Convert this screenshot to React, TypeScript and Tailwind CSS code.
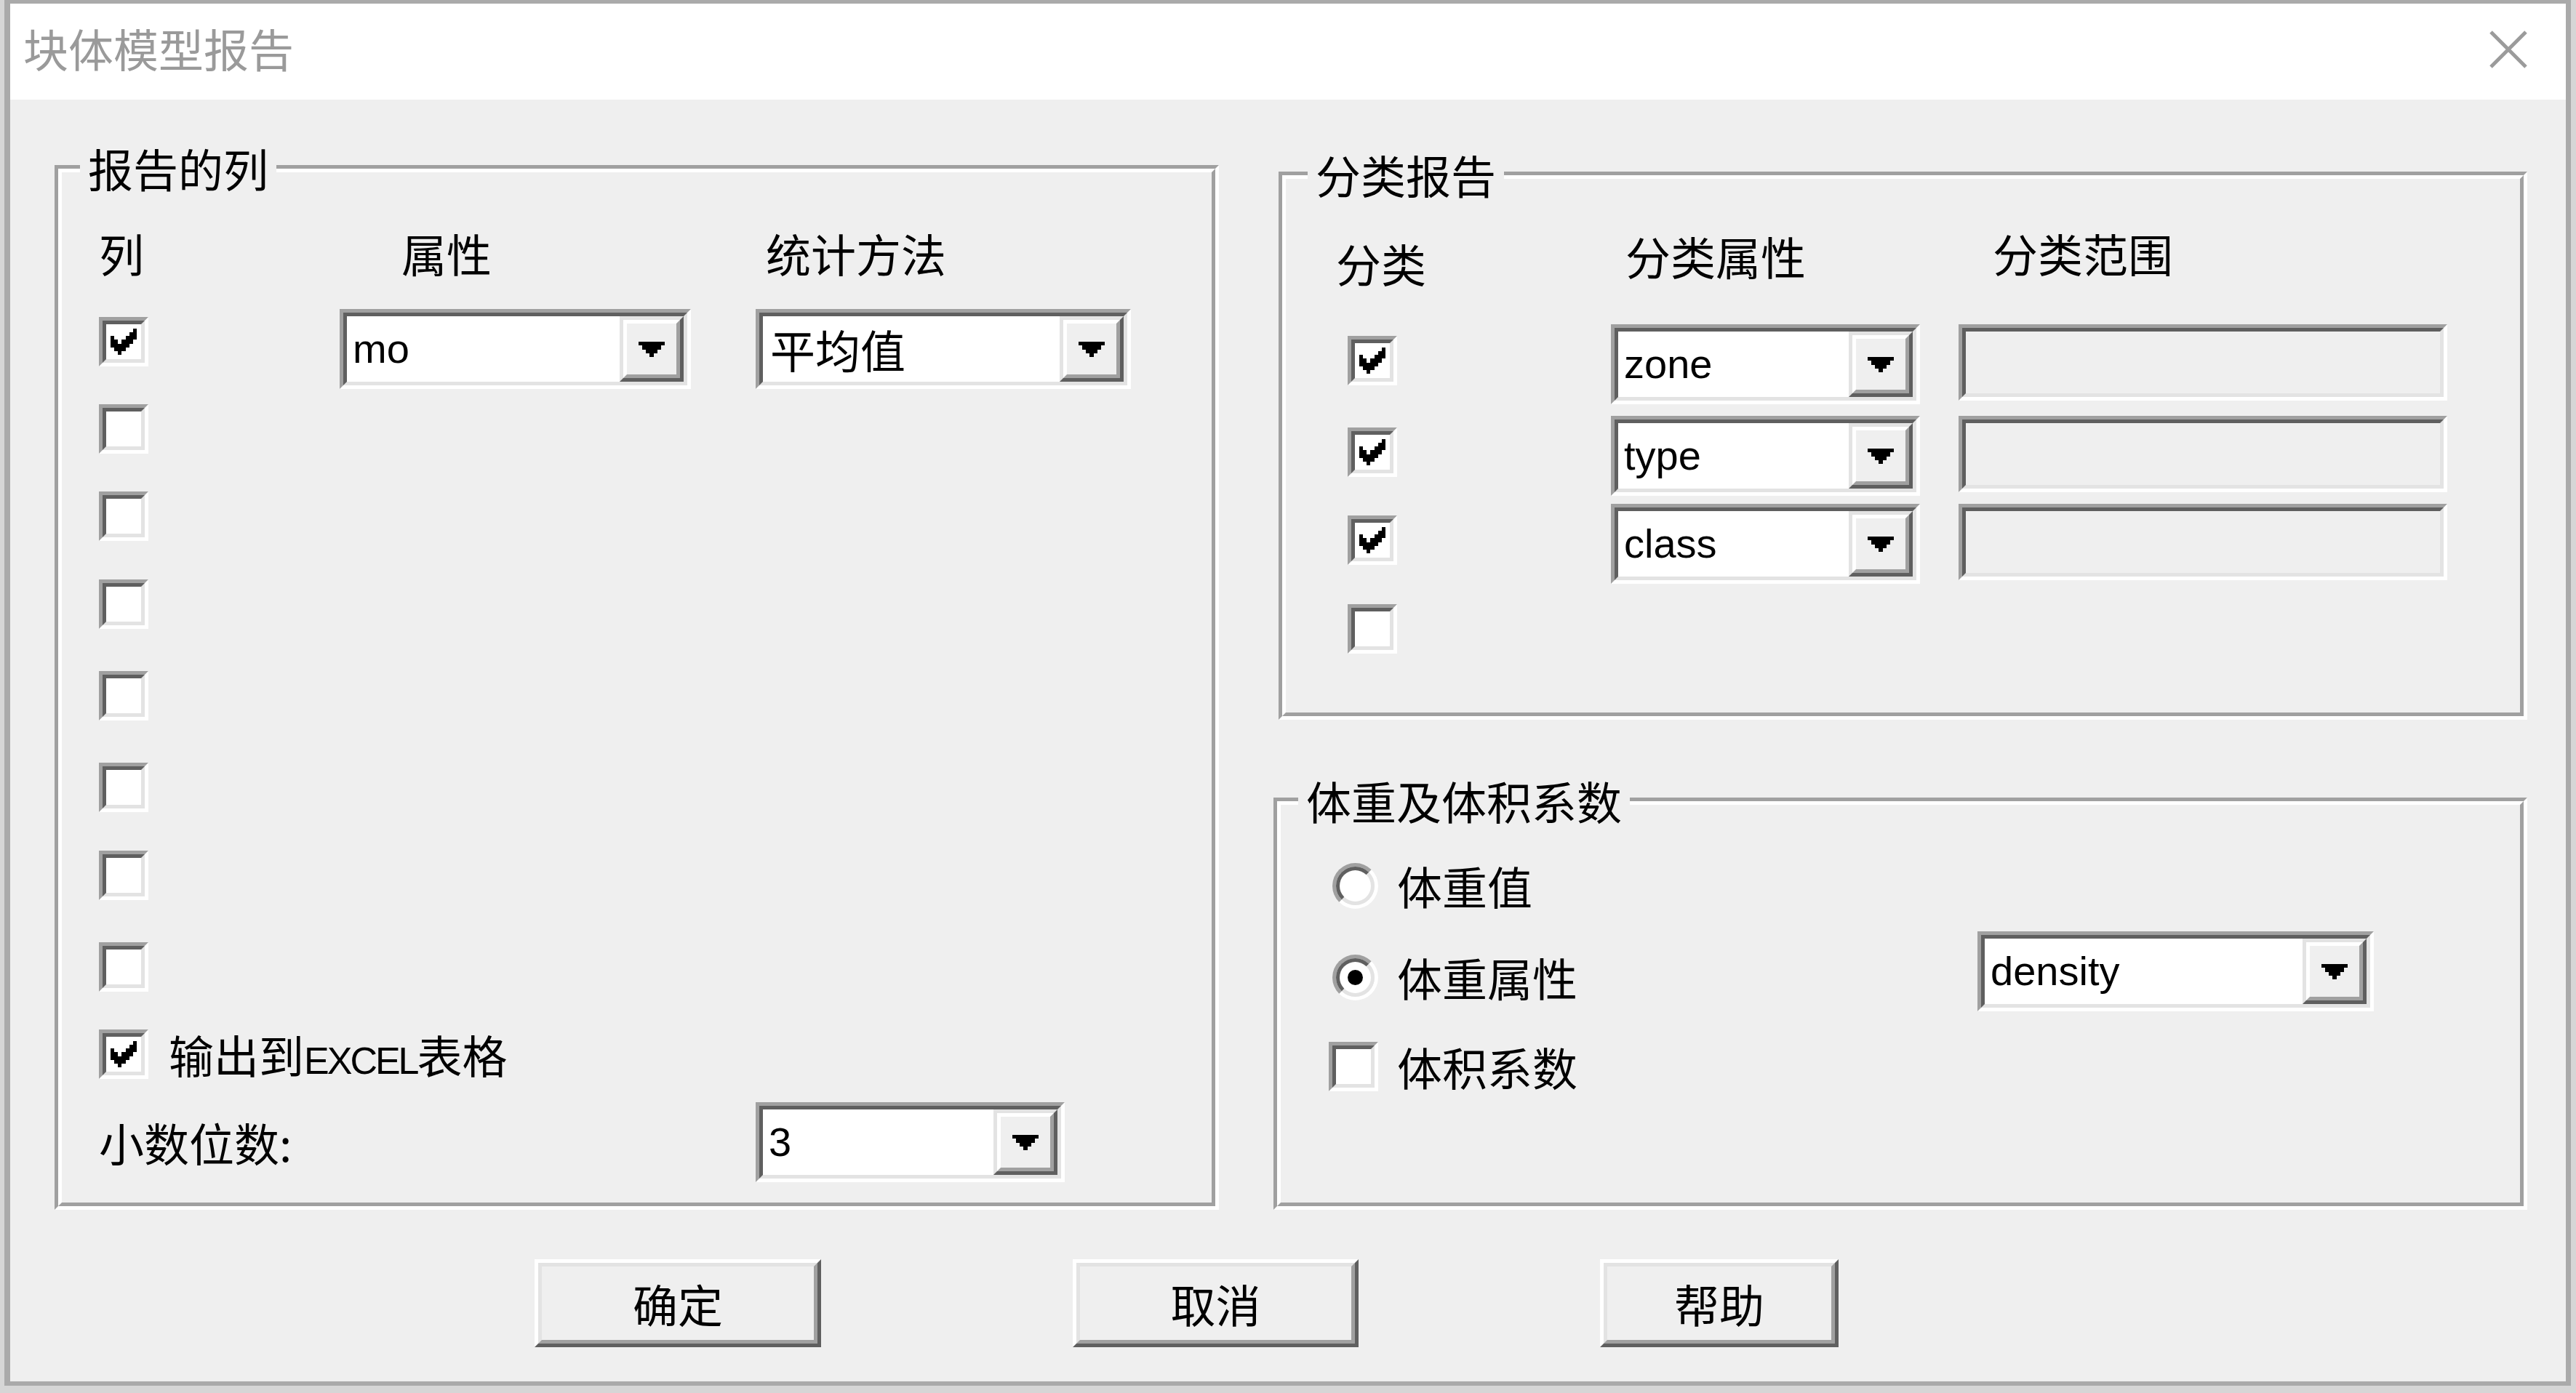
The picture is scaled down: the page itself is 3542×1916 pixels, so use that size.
import type { ReactNode } from "react"

const cjk = "font-['Noto_Sans_CJK_SC',sans-serif]"
const latin = "font-['Liberation_Sans','Noto_Sans_CJK_SC',sans-serif]"

function CheckMark() {
  return (
    <svg viewBox="0 0 7 7" className="w-[36px] h-[36px]" shapeRendering="crispEdges">
      <path
        d="M0 2h1v3H0zM1 3h1v3H1zM2 4h1v3H2zM3 3h1v3H3zM4 2h1v3H4zM5 1h1v3H5zM6 0h1v3H6z"
        fill="#000"
      />
    </svg>
  )
}

function Arrow() {
  return (
    <svg viewBox="0 0 7 4" className="w-[36px] h-[21px]" shapeRendering="crispEdges">
      <path d="M0 0h7v1H6v1H5v1H4v1H3V3H2V2H1V1H0z" fill="#000" />
    </svg>
  )
}

// classic sunken 3D frame
function Sunken({ className = "", inner = "", children }: { className?: string; inner?: string; children?: ReactNode }) {
  return (
    <div className={`border-[5px] border-t-[#a0a0a0] border-l-[#a0a0a0] border-r-white border-b-white ${className}`}>
      <div className={`w-full h-full border-[5px] border-t-[#5f5f5f] border-l-[#5f5f5f] border-r-[#e3e3e3] border-b-[#e3e3e3] ${inner}`}>
        {children}
      </div>
    </div>
  )
}

function Checkbox({ checked = false, className = "" }: { checked?: boolean; className?: string }) {
  return (
    <Sunken className={`w-[68px] h-[68px] shrink-0 ${className}`} inner="bg-white flex items-center justify-center">
      {checked && <CheckMark />}
    </Sunken>
  )
}

function Radio({ selected = false }: { selected?: boolean }) {
  return (
    <div className="w-[63px] h-[63px] shrink-0 rounded-full border-[5px] border-t-[#a0a0a0] border-l-[#a0a0a0] border-r-white border-b-white">
      <div className="w-full h-full rounded-full border-[5px] border-t-[#5f5f5f] border-l-[#5f5f5f] border-r-[#e3e3e3] border-b-[#e3e3e3] bg-white flex items-center justify-center">
        {selected && <div className="w-[21px] h-[21px] rounded-full bg-black" />}
      </div>
    </div>
  )
}

function Dropdown({ value, cjkText = false, className = "" }: { value: string; cjkText?: boolean; className?: string }) {
  return (
    <Sunken className={`h-[110px] shrink-0 ${className}`} inner="flex bg-white">
      <div
        className={`flex-1 flex items-center text-black ${
          cjkText ? `${cjk} text-[62px] pl-[10px]` : `${latin} text-[56px] pl-[8px]`
        }`}
      >
        {value}
      </div>
      <div className="w-[88px] border-[5px] border-t-[#e3e3e3] border-l-[#e3e3e3] border-r-[#5f5f5f] border-b-[#5f5f5f]">
        <div className="w-full h-full border-[5px] border-t-white border-l-white border-r-[#a0a0a0] border-b-[#a0a0a0] bg-[#efefef] flex items-center justify-center">
          <Arrow />
        </div>
      </div>
    </Sunken>
  )
}

function Group({
  title,
  legend,
  className = "",
  children,
}: {
  title: string
  legend: string
  className?: string
  children?: ReactNode
}) {
  return (
    <div
      className={`relative shrink-0 border-[5px] border-t-[#a0a0a0] border-l-[#a0a0a0] border-r-white border-b-white ${className}`}
    >
      <div className="w-full h-full border-[5px] border-t-white border-l-white border-r-[#a0a0a0] border-b-[#a0a0a0] flex flex-col">
        {children}
      </div>
      <div className={`absolute top-[-37px] px-[11px] bg-[#efefef] leading-[72px] text-[62px] whitespace-nowrap ${legend}`}>
        {title}
      </div>
    </div>
  )
}

function Button({ label, className = "" }: { label: string; className?: string }) {
  return (
    <div
      className={`h-[121px] shrink-0 border-[5px] border-t-white border-l-white border-r-[#5f5f5f] border-b-[#5f5f5f] ${className}`}
    >
      <div className="w-full h-full border-[5px] border-t-[#e3e3e3] border-l-[#e3e3e3] border-r-[#a0a0a0] border-b-[#a0a0a0] flex items-center justify-center text-[62px] leading-[72px]">
        {label}
      </div>
    </div>
  )
}

const leftGaps = ["mt-[21px]", "mt-[52px]", "mt-[53px]", "mt-[58px]", "mt-[58px]", "mt-[53px]", "mt-[58px]"]

const categoryRows = [
  { value: "zone", gap: "mt-[48px]" },
  { value: "type", gap: "mt-[16px]" },
  { value: "class", gap: "mt-[11px]" },
]

export default function App() {
  return (
    <div className={`w-[3542px] h-[1916px] bg-[#d6d6d6] pl-[6px] pr-[7px] pb-[10px] flex overflow-hidden text-black ${cjk}`}>
      <div className="flex-1 flex flex-col border-[#aaaaaa] border-t-[5px] border-l-[8px] border-r-[7px] border-b-[6px]">
        {/* Title bar */}
        <div className="h-[132px] shrink-0 bg-white flex items-center justify-between">
          <span className="pl-[18px] pb-[10px] text-[62px] leading-[72px] text-[#9a9a9a]">块体模型报告</span>
          <svg viewBox="0 0 52 52" className="w-[52px] h-[52px] mr-[53px] mb-[6px]">
            <path d="M2 2L50 50M50 2L2 50" stroke="#9b9b9b" strokeWidth="5" />
          </svg>
        </div>

        {/* Body */}
        <div className="flex-1 bg-[#efefef] flex flex-col">
          <div className="flex items-start">
            {/* 报告的列 */}
            <Group title="报告的列" legend="left-[30px]" className="ml-[61px] mt-[90px] w-[1601px] h-[1437px]">
              <div className="flex mt-[75px] text-[62px] leading-[72px]">
                <span className="ml-[51px]">列</span>
                <span className="ml-[354px]">属性</span>
                <span className="ml-[377px]">统计方法</span>
              </div>
              <div className="flex items-start mt-[41px]">
                <Checkbox checked className="mt-[11px] ml-[51px]" />
                <Dropdown value="mo" className="ml-[263px] w-[483px]" />
                <Dropdown value="平均值" cjkText className="ml-[89px] w-[516px]" />
              </div>
              {leftGaps.map((gap, i) => (
                <Checkbox key={i} className={`ml-[51px] ${gap}`} />
              ))}
              <div className="flex items-center h-[72px] mt-[50px] ml-[51px]">
                <Checkbox checked />
                <span className="ml-[28px] text-[62px] leading-[72px] whitespace-nowrap">
                  输出到<span className={`${latin} text-[52px] tracking-[-3px] leading-none`}>EXCEL</span>表格
                </span>
              </div>
              <div className="flex items-center mt-[30px]">
                <span className="ml-[51px] w-[903px] text-[62px] leading-[72px]">小数位数:</span>
                <Dropdown value="3" className="w-[425px]" />
              </div>
            </Group>

            <div className="flex flex-col ml-[75px] mt-[99px] w-[1724px]">
              {/* 分类报告 */}
              <Group title="分类报告" legend="left-[35px]" className="ml-[7px] w-[1717px] h-[754px]">
                <div className="flex items-start mt-[66px] text-[62px] leading-[72px]">
                  <span className="ml-[69px] mt-[14px]">分类</span>
                  <span className="ml-[274px] mt-[4px]">分类属性</span>
                  <span className="ml-[257px]">分类范围</span>
                </div>
                {categoryRows.map((row) => (
                  <div key={row.value} className={`flex items-start ${row.gap}`}>
                    <Checkbox checked className="ml-[85px] mt-[16px]" />
                    <Dropdown value={row.value} className="ml-[294px] w-[425px]" />
                    <Sunken className="ml-[53px] w-[672px] h-[105px]" inner="bg-[#efefef]" />
                  </div>
                ))}
                <Checkbox className="ml-[85px] mt-[28px]" />
              </Group>

              {/* 体重及体积系数 */}
              <Group title="体重及体积系数" legend="left-[29px]" className="mt-[107px] w-[1724px] h-[567px]">
                <div className="flex items-center mt-[75px] ml-[71px]">
                  <Radio />
                  <span className="ml-[26px] text-[62px] leading-[72px]">体重值</span>
                </div>
                <div className="flex items-start mt-[27px]">
                  <div className="flex items-center ml-[71px] mt-[27px] w-[887px]">
                    <Radio selected />
                    <span className="ml-[26px] text-[62px] leading-[72px]">体重属性</span>
                  </div>
                  <Dropdown value="density" className="w-[545px]" />
                </div>
                <div className="flex items-center mt-[40px] ml-[66px]">
                  <Checkbox />
                  <span className="ml-[26px] text-[62px] leading-[72px]">体积系数</span>
                </div>
              </Group>
            </div>
          </div>

          {/* Buttons */}
          <div className="flex mt-[68px]">
            <Button label="确定" className="ml-[721px] w-[394px]" />
            <Button label="取消" className="ml-[346px] w-[393px]" />
            <Button label="帮助" className="ml-[332px] w-[328px]" />
          </div>
        </div>
      </div>
    </div>
  )
}
